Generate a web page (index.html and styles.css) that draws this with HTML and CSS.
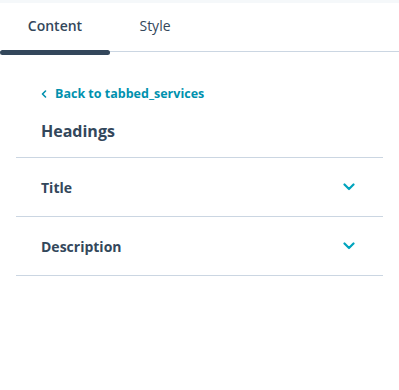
FILE: index.html
```html
<!DOCTYPE html>
<html lang="en">
<head>
    <meta charset="UTF-8">
    <meta name="viewport" content="width=device-width, initial-scale=1.0">
    <title>Module Editor</title>
    <link rel="stylesheet" href="styles.css">
</head>
<body>
    <div class="panel">
        <div class="tabs">
            <button class="tab active">Content</button>
            <button class="tab">Style</button>
        </div>
        <div class="content">
            <a href="#" class="back-link">
                <svg width="6" height="8" viewBox="0 0 6 8"><path d="M4.5 1 L1.5 4 L4.5 7" fill="none" stroke="currentColor" stroke-width="1.6" stroke-linecap="round" stroke-linejoin="round"/></svg>
                Back to tabbed_services
            </a>
            <h2>Headings</h2>
            <div class="fields">
                <div class="field-row">
                    <span>Title</span>
                    <svg class="chevron" width="12" height="8" viewBox="0 0 12 8"><path d="M1.5 1.5 L6 6 L10.5 1.5" fill="none" stroke="currentColor" stroke-width="2.2" stroke-linecap="round" stroke-linejoin="round"/></svg>
                </div>
                <div class="field-row">
                    <span>Description</span>
                    <svg class="chevron" width="12" height="8" viewBox="0 0 12 8"><path d="M1.5 1.5 L6 6 L10.5 1.5" fill="none" stroke="currentColor" stroke-width="2.2" stroke-linecap="round" stroke-linejoin="round"/></svg>
                </div>
            </div>
        </div>
    </div>
</body>
</html>
```
FILE: styles.css
```css
:root {
    --text-color: #33475b;
    --link-color: #0091ae;
    --chevron-color: #00a4bd;
    --border-color: #cbd6e2;
    --top-strip: #f5f8fa;
}

* {
    margin: 0;
    padding: 0;
    box-sizing: border-box;
}

body {
    font-family: 'Open Sans', sans-serif;
    color: var(--text-color);
    background-color: #ffffff;
    border-top: 3px solid var(--top-strip);
}

.tabs {
    display: flex;
    height: 49px;
    border-bottom: 1px solid var(--border-color);
}

.tab {
    position: relative;
    width: 110px;
    height: 49px;
    padding-bottom: 4px;
    background: none;
    border: none;
    font-family: inherit;
    font-size: 14px;
    color: var(--text-color);
    cursor: pointer;
}

.tab + .tab {
    width: 90px;
}

.tab.active {
    font-weight: 600;
}

.tab.active::after {
    content: '';
    position: absolute;
    left: 0;
    right: 0;
    bottom: -3px;
    height: 5px;
    border-radius: 3px;
    background-color: var(--text-color);
}

.content {
    padding: 33px 16px 0;
}

.back-link {
    display: flex;
    align-items: center;
    gap: 8px;
    padding-left: 25px;
    color: var(--link-color);
    font-size: 12.5px;
    font-weight: 700;
    text-decoration: none;
}

h2 {
    padding: 18px 0 15px 25px;
    font-size: 16px;
    font-weight: 700;
}

.fields {
    border-top: 1px solid var(--border-color);
}

.field-row {
    display: flex;
    justify-content: space-between;
    align-items: center;
    height: 59px;
    padding: 0 28px 0 25px;
    border-bottom: 1px solid var(--border-color);
    font-size: 14px;
    font-weight: 700;
}

.chevron {
    color: var(--chevron-color);
}
```
